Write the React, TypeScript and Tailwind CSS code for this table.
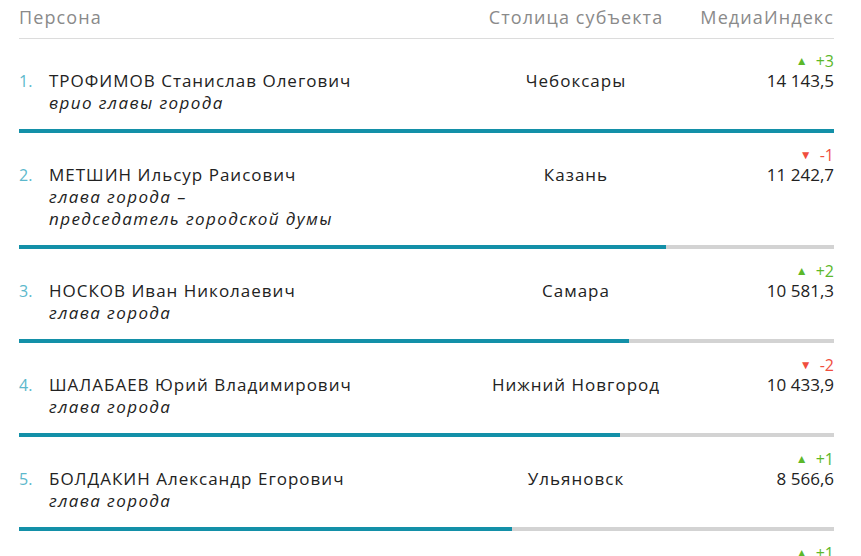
const rows = [
  {
    n: 1,
    name: "ТРОФИМОВ Станислав Олегович",
    role: ["врио главы города"],
    city: "Чебоксары",
    value: "14 143,5",
    delta: "+3",
    up: true,
    pct: 100,
  },
  {
    n: 2,
    name: "МЕТШИН Ильсур Раисович",
    role: ["глава города –", "председатель городской думы"],
    city: "Казань",
    value: "11 242,7",
    delta: "-1",
    up: false,
    pct: 79.4,
  },
  {
    n: 3,
    name: "НОСКОВ Иван Николаевич",
    role: ["глава города"],
    city: "Самара",
    value: "10 581,3",
    delta: "+2",
    up: true,
    pct: 74.8,
  },
  {
    n: 4,
    name: "ШАЛАБАЕВ Юрий Владимирович",
    role: ["глава города"],
    city: "Нижний Новгород",
    value: "10 433,9",
    delta: "-2",
    up: false,
    pct: 73.7,
  },
  {
    n: 5,
    name: "БОЛДАКИН Александр Егорович",
    role: ["глава города"],
    city: "Ульяновск",
    value: "8 566,6",
    delta: "+1",
    up: true,
    pct: 60.5,
  },
  {
    n: 6,
    name: "",
    role: [],
    city: "",
    value: "",
    delta: "+1",
    up: true,
    pct: 0,
  },
];

type Row = (typeof rows)[number];

const Delta = ({ up, value }: { up: boolean; value: string }) => (
  <div
    className={`flex items-center justify-end gap-[8px] text-[16px] leading-[18px] ${
      up ? "text-[#5cb82a]" : "text-[#f04e3e]"
    }`}
  >
    <span className="text-[12px]">{up ? "▲" : "▼"}</span>
    <span>{value}</span>
  </div>
);

const RatingRow = ({ row }: { row: Row }) => (
  <div className="pt-[13px]">
    <div className="grid grid-cols-[30px_1fr_190px_163px]">
      <div className="pt-[18px] text-[16px] leading-[22px] text-[#5cb8cc]">
        {row.n}.
      </div>
      <div className="pt-[18px] text-[17px] leading-[22px] tracking-[1px] text-[#222]">
        <div>{row.name}</div>
        {row.role.map((r) => (
          <div key={r} className="italic tracking-[1.4px]">
            {r}
          </div>
        ))}
      </div>
      <div className="pt-[18px] text-center text-[17px] leading-[22px] tracking-[1px] text-[#222]">
        {row.city}
      </div>
      <div className="text-right">
        <Delta up={row.up} value={row.delta} />
        <div className="text-[17px] leading-[22px] text-[#222]">
          {row.value}
        </div>
      </div>
    </div>
    {row.value && (
      <div className="mt-[15px] flex h-[4px] bg-[#d3d3d3]">
        <div className="bg-[#1390a8]" style={{ width: `${row.pct}%` }} />
      </div>
    )}
  </div>
);

export default function App() {
  return (
    <div
      className="h-[556px] overflow-hidden bg-white pl-[19px] pr-[27px]"
      style={{ fontFamily: '"Open Sans", "Liberation Sans", sans-serif' }}
    >
      <div className="grid grid-cols-[1fr_190px_163px] border-b border-[#dcdcdc] pb-[10px] pt-[6px] text-[18px] leading-[22px] tracking-[1.1px] text-[#8a8a8a]">
        <div>Персона</div>
        <div className="text-center">Столица субъекта</div>
        <div className="text-right">МедиаИндекс</div>
      </div>
      {rows.map((row) => (
        <RatingRow key={row.n} row={row} />
      ))}
    </div>
  );
}
